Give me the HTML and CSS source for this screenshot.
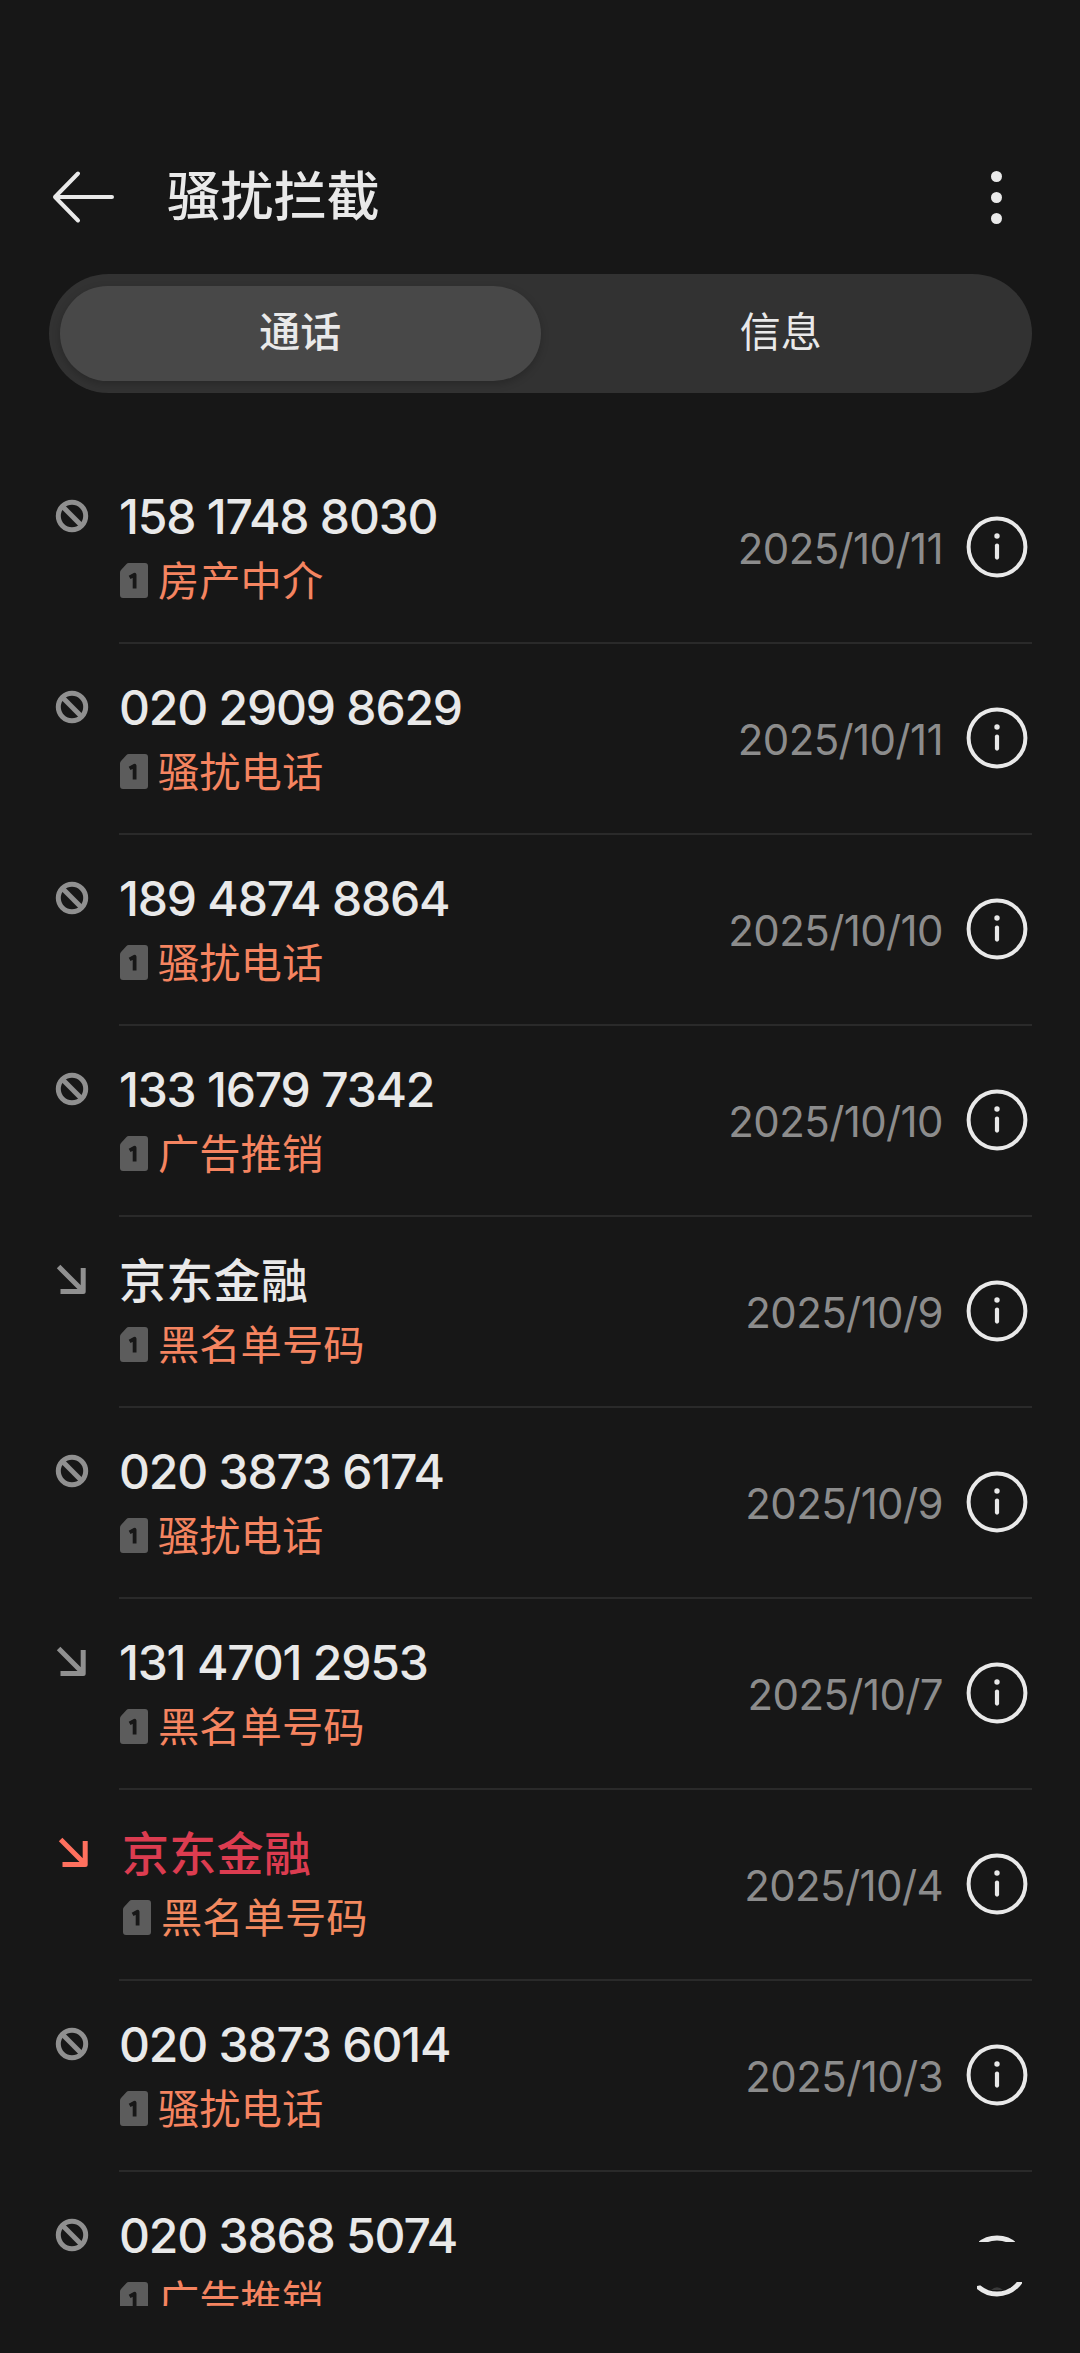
FILE: index.html
```html
<!DOCTYPE html>
<html lang="zh-CN">
<head>
    <meta charset="UTF-8">
    <meta name="viewport" content="width=device-width, initial-scale=1.0">
    <title>骚扰拦截</title>
    <link rel="stylesheet" href="styles.css">
</head>
<body>

    <!-- Shared icons -->
    <svg class="icon-defs" width="0" height="0">
        <clipPath id="ring-ends">
            <rect x="13" y="0" width="36" height="7"/>
            <path d="M11 51 L16 50 L19 53 H44 L50 47 L56 47 V62 H11 Z"/>
        </clipPath>
        <symbol id="icon-block" viewBox="0 0 34 34">
            <circle cx="17" cy="17" r="13.7" fill="none" stroke="currentColor" stroke-width="5"/>
            <path d="M7.8 7.8 L26.2 26.2" stroke="currentColor" stroke-width="5"/>
        </symbol>
        <symbol id="icon-arrow" viewBox="0 0 34 34">
            <path d="M3.6 3.6 L28 28 M5.5 28.4 H28.2 V5" fill="none" stroke="currentColor" stroke-width="5" stroke-linejoin="round"/>
        </symbol>
        <symbol id="icon-sim" viewBox="0 0 28 35">
            <path d="M8.5 0 H25 Q28 0 28 3 V32 Q28 35 25 35 H3 Q0 35 0 32 V9.5 Q0 8 1 7 L6.5 1 Q7.4 0 8.5 0 Z" fill="#5c5c5c"/>
            <path d="M9.6 14.4 L14.6 11.8 V25.4" fill="none" stroke="#171717" stroke-width="3.8" stroke-linejoin="round"/>
        </symbol>
        <symbol id="icon-info" viewBox="0 0 62 62">
            <circle cx="31" cy="31" r="28.4" fill="none" stroke="currentColor" stroke-width="4"/>
            <circle cx="31" cy="20" r="2.7" fill="currentColor"/>
            <path d="M31 29.6 V41.6" stroke="currentColor" stroke-width="4.2" stroke-linecap="round"/>
        </symbol>
        <symbol id="icon-info-cut" viewBox="0 0 62 62">
            <path d="M25 55 Q31 49.5 37 55 Z" fill="#3a3a3a"/>
            <circle cx="31" cy="31" r="28" fill="none" stroke="currentColor" stroke-width="5" clip-path="url(#ring-ends)"/>
        </symbol>
    </svg>

    <header class="topbar">
        <svg class="back" width="64" height="56" viewBox="0 0 64 56">
            <path d="M27 4.5 L4 28 L27 51.5 M4 28 H61" fill="none" stroke="currentColor" stroke-width="4" stroke-linecap="round" stroke-linejoin="round"/>
        </svg>
        <h1 class="title">骚扰拦截</h1>
        <div class="more"><i></i><i></i><i></i></div>
    </header>

    <nav class="tabs">
        <div class="tab active">通话</div>
        <div class="tab">信息</div>
    </nav>

    <main class="list">
        <div class="row">
            <svg class="mark"><use href="#icon-block"/></svg>
            <div class="body">
                <div class="caller">
                    <div class="number">158 1748 8030</div>
                    <div class="tag"><svg class="sim"><use href="#icon-sim"/></svg>房产中介</div>
                </div>
                <div class="date">2025/10/11</div>
                <svg class="info"><use href="#icon-info"/></svg>
            </div>
        </div>
        <div class="row">
            <svg class="mark"><use href="#icon-block"/></svg>
            <div class="body">
                <div class="caller">
                    <div class="number">020 2909 8629</div>
                    <div class="tag"><svg class="sim"><use href="#icon-sim"/></svg>骚扰电话</div>
                </div>
                <div class="date">2025/10/11</div>
                <svg class="info"><use href="#icon-info"/></svg>
            </div>
        </div>
        <div class="row">
            <svg class="mark"><use href="#icon-block"/></svg>
            <div class="body">
                <div class="caller">
                    <div class="number">189 4874 8864</div>
                    <div class="tag"><svg class="sim"><use href="#icon-sim"/></svg>骚扰电话</div>
                </div>
                <div class="date">2025/10/10</div>
                <svg class="info"><use href="#icon-info"/></svg>
            </div>
        </div>
        <div class="row">
            <svg class="mark"><use href="#icon-block"/></svg>
            <div class="body">
                <div class="caller">
                    <div class="number">133 1679 7342</div>
                    <div class="tag"><svg class="sim"><use href="#icon-sim"/></svg>广告推销</div>
                </div>
                <div class="date">2025/10/10</div>
                <svg class="info"><use href="#icon-info"/></svg>
            </div>
        </div>
        <div class="row">
            <svg class="mark"><use href="#icon-arrow"/></svg>
            <div class="body">
                <div class="caller">
                    <div class="number name">京东金融</div>
                    <div class="tag"><svg class="sim"><use href="#icon-sim"/></svg>黑名单号码</div>
                </div>
                <div class="date">2025/10/9</div>
                <svg class="info"><use href="#icon-info"/></svg>
            </div>
        </div>
        <div class="row">
            <svg class="mark"><use href="#icon-block"/></svg>
            <div class="body">
                <div class="caller">
                    <div class="number">020 3873 6174</div>
                    <div class="tag"><svg class="sim"><use href="#icon-sim"/></svg>骚扰电话</div>
                </div>
                <div class="date">2025/10/9</div>
                <svg class="info"><use href="#icon-info"/></svg>
            </div>
        </div>
        <div class="row">
            <svg class="mark"><use href="#icon-arrow"/></svg>
            <div class="body">
                <div class="caller">
                    <div class="number">131 4701 2953</div>
                    <div class="tag"><svg class="sim"><use href="#icon-sim"/></svg>黑名单号码</div>
                </div>
                <div class="date">2025/10/7</div>
                <svg class="info"><use href="#icon-info"/></svg>
            </div>
        </div>
        <div class="row missed">
            <svg class="mark"><use href="#icon-arrow"/></svg>
            <div class="body">
                <div class="caller">
                    <div class="number name">京东金融</div>
                    <div class="tag"><svg class="sim"><use href="#icon-sim"/></svg>黑名单号码</div>
                </div>
                <div class="date">2025/10/4</div>
                <svg class="info"><use href="#icon-info"/></svg>
            </div>
        </div>
        <div class="row">
            <svg class="mark"><use href="#icon-block"/></svg>
            <div class="body">
                <div class="caller">
                    <div class="number">020 3873 6014</div>
                    <div class="tag"><svg class="sim"><use href="#icon-sim"/></svg>骚扰电话</div>
                </div>
                <div class="date">2025/10/3</div>
                <svg class="info"><use href="#icon-info"/></svg>
            </div>
        </div>
        <div class="row">
            <svg class="mark"><use href="#icon-block"/></svg>
            <div class="body">
                <div class="caller">
                    <div class="number">020 3868 5074</div>
                    <div class="tag"><svg class="sim"><use href="#icon-sim"/></svg>广告推销</div>
                </div>
                <svg class="info"><use href="#icon-info-cut"/></svg>
            </div>
        </div>
    </main>

</body>
</html>
```
FILE: styles.css
```css
* {
    box-sizing: border-box;
}

body {
    margin: 0;
    height: 2353px;
    overflow: hidden;
    background: #171717;
    color: #e9e9e9;
    font-family: Inter, "Noto Sans CJK SC", sans-serif;
}

.icon-defs {
    display: block;
}

/* Header */
.topbar {
    display: flex;
    align-items: center;
    height: 274px;
    padding: 120px 78px 0 51px;
}

.title {
    flex: 1;
    margin: 0 0 0 52px;
    font-size: 53.2px;
    font-weight: 500;
    line-height: 80px;
}

.more {
    display: flex;
    flex-direction: column;
    gap: 10px;
}

.more i {
    width: 11px;
    height: 11px;
    border-radius: 50%;
    background: #e9e9e9;
}

/* Tabs */
.tabs {
    display: flex;
    width: 983px;
    height: 119px;
    margin-left: 49px;
    padding: 12px 11px;
    border-radius: 60px;
    background: #323232;
}

.tab {
    flex: 1;
    border-radius: 48px;
    font-size: 41px;
    line-height: 92px;
    text-align: center;
}

.tab.active {
    background: #484848;
    font-weight: 500;
    box-shadow: 0 3px 8px rgba(0, 0, 0, 0.2);
}

/* Call list */
.list {
    height: 1853px;
    margin-top: 60px;
    overflow: hidden;
}

.row {
    display: flex;
    height: 191px;
    padding: 0 48px 0 55px;
}

.mark {
    width: 34px;
    height: 34px;
    margin: 46px 30px 0 0;
    color: #909090;
}

.body {
    flex: 1;
    display: flex;
    border-bottom: 2px solid #2a2a2a;
}

.caller {
    flex: 1;
}

.number {
    height: 60px;
    margin-top: 34px;
    font-size: 48px;
    font-weight: 500;
    line-height: 60px;
    letter-spacing: -1.2px;
    white-space: nowrap;
}

.name {
    font-size: 47px;
    letter-spacing: 0.3px;
}

.tag {
    display: flex;
    align-items: center;
    height: 60px;
    margin-top: 4px;
    padding-bottom: 6px;
    font-size: 41.3px;
    color: #f58460;
}

.sim {
    width: 28px;
    height: 35px;
    margin: 5px 10px 0 1px;
}

.date {
    margin-top: 70px;
    font-size: 42px;
    line-height: 52px;
    letter-spacing: -0.6px;
    color: #8c8c8c;
}

.info {
    width: 62px;
    height: 62px;
    margin: 63px 4px 0 23px;
    color: #e9e9e9;
}

/* Missed call */
.missed .mark {
    margin-right: 30px;
    margin-left: 2px;
    color: #ff705e;
}

.missed .body {
    margin-left: -2px;
}

.missed .caller {
    padding-left: 3px;
}

.missed .name {
    color: #dc3c50;
}

.missed .tag {
    color: #f3895f;
}
```
